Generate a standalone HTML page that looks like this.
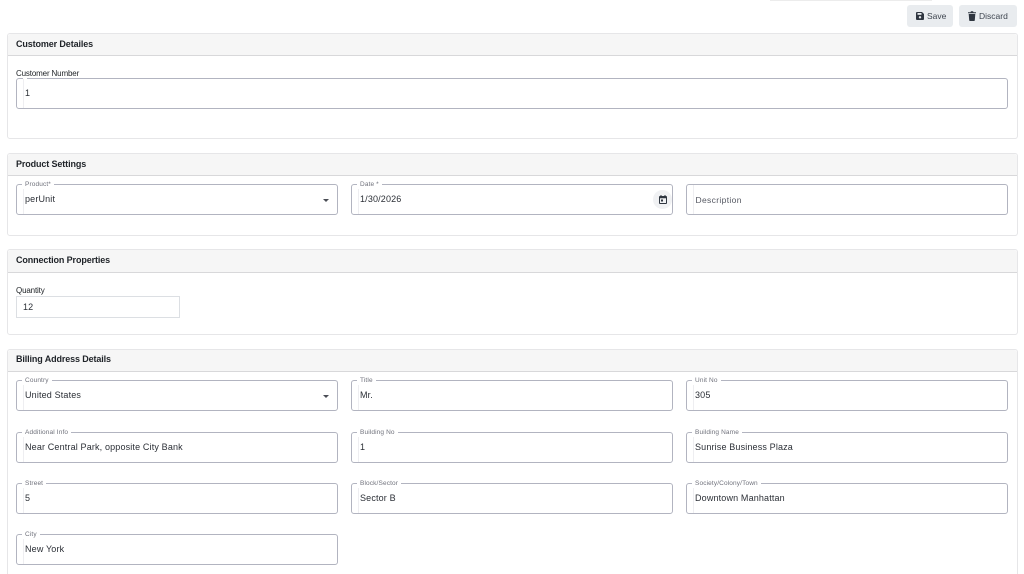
<!DOCTYPE html>
<html><head><meta charset="utf-8">
<style>
html,body{margin:0;padding:0;background:#fff;width:1024px;height:574px;overflow:hidden;font-family:"Liberation Sans",sans-serif;color:#212529}
#w{position:absolute;left:0;top:0;width:1024px;height:574px;overflow:hidden}
.a{position:absolute;box-sizing:border-box}
.card{position:absolute;left:7px;width:1011px;box-sizing:border-box;border:1px solid #e6e6e8;border-radius:3px;background:#fff}
.hd{position:absolute;left:0;top:0;right:0;box-sizing:border-box;background:#f6f6f6;border-bottom:1px solid #d8d8da;border-radius:3px 3px 0 0}
.ht{position:absolute;left:16px;font:bold 9px/12px "Liberation Sans",sans-serif;color:#1f2328;white-space:nowrap;letter-spacing:-.12px}
.f{position:absolute;box-sizing:border-box;border:1px solid #b2b4c0;border-radius:3px;background:#fff}
.f:before{content:"";position:absolute;left:6px;top:0;bottom:0;width:1px;background:#eeeef1}
.lb{position:absolute;font:6.5px/8px "Liberation Sans",sans-serif;color:#70727c;background:#fff;padding:0 3px;white-space:nowrap;letter-spacing:.13px}
.v{position:absolute;font:9px/12px "Liberation Sans",sans-serif;color:#2b2f36;white-space:nowrap;letter-spacing:.155px;background:transparent}
.pl{position:absolute;font:8px/11px "Liberation Sans",sans-serif;color:#212529;white-space:nowrap;letter-spacing:-.15px}
.arr{position:absolute;width:0;height:0;border-left:3px solid transparent;border-right:3px solid transparent;border-top:3px solid #4a4d55}
.btn{position:absolute;top:5px;height:22px;background:#e9ecef;border-radius:3px;font:8.5px/22px "Liberation Sans",sans-serif;color:#3f4650;white-space:nowrap}
</style></head><body><div id="w">

<div class="a" style="left:770px;top:0;width:162px;height:1px;background:#ececec"></div>

<div class="btn" style="left:907px;width:46px"><svg class="a" style="left:9px;top:7px" width="8" height="8" viewBox="0 0 8 8"><path d="M0 1a1 1 0 0 1 1-1h5l2 2v5a1 1 0 0 1-1 1H1a1 1 0 0 1-1-1z" fill="#2f3640"/><rect x="1.5" y="1" width="4" height="1.8" fill="#e9ecef"/><circle cx="4" cy="5.3" r="1.2" fill="#e9ecef"/></svg><span class="a" style="left:20px;top:0">Save</span></div>
<div class="btn" style="left:959px;width:58px"><svg class="a" style="left:9px;top:6px" width="8" height="10" viewBox="0 0 8 10"><path d="M0 1.2h2.4L3 .3h2l.6.9H8v1.1H0zM.7 3h6.6l-.5 6.3a.7.7 0 0 1-.7.7H1.9a.7.7 0 0 1-.7-.7z" fill="#2f3640"/></svg><span class="a" style="left:20px;top:0">Discard</span></div>

<!-- Card 1 -->
<div class="card" style="top:33px;height:106px"><div class="hd" style="height:22px"></div></div>
<div class="ht" style="top:38px">Customer Detailes</div>
<div class="f" style="left:16px;top:78px;width:992px;height:31px"></div>
<div class="a" style="left:23px;top:78px;width:4px;height:1px;background:#fff"></div>
<div class="pl" style="left:16px;top:68px">Customer Number</div>
<div class="v" style="left:25px;top:87px">1</div>

<!-- Card 2 -->
<div class="card" style="top:153px;height:83px"><div class="hd" style="height:22px"></div></div>
<div class="ht" style="top:158px">Product Settings</div>
<div class="f" style="left:16px;top:184px;width:322px;height:31px"></div>
<div class="lb" style="left:22px;top:181px">Product*</div>
<div class="v" style="left:25px;top:193px">perUnit</div>
<div class="arr" style="left:323px;top:199px"></div>
<div class="f" style="left:351px;top:184px;width:322px;height:31px"></div>
<div class="lb" style="left:357px;top:181px">Date *</div>
<div class="v" style="left:360px;top:193px">1/30/2026</div>
<div class="a" style="left:653px;top:190px;width:19px;height:19px;border-radius:50%;background:#f0f1f3"></div>
<svg class="a" style="left:659px;top:195px" width="8" height="9" viewBox="0 0 8 9"><path d="M1.5 0v1H1a1 1 0 0 0-1 1v6a1 1 0 0 0 1 1h6a1 1 0 0 0 1-1V2a1 1 0 0 0-1-1h-.5V0h-1v1h-3V0zM1 3.2h6V8H1z" fill="#2f3640"/><rect x="2" y="4.5" width="2" height="2" fill="#2f3640"/></svg>
<div class="f" style="left:686px;top:184px;width:322px;height:31px"></div>
<div class="pl" style="left:695.5px;top:195px;color:#555862;font-size:8.5px;letter-spacing:.34px">Description</div>

<!-- Card 3 -->
<div class="card" style="top:249px;height:86px"><div class="hd" style="height:23px"></div></div>
<div class="ht" style="top:254px">Connection Properties</div>
<div class="pl" style="left:16px;top:285px">Quantity</div>
<div class="a" style="left:16px;top:296px;width:164px;height:22px;border:1px solid #dcdfe3"></div>
<div class="v" style="left:23px;top:301px">12</div>

<!-- Card 4 -->
<div class="card" style="top:349px;height:240px"><div class="hd" style="height:22px"></div></div>
<div class="ht" style="top:353px">Billing Address Details</div>

<div class="f" style="left:16px;top:380px;width:322px;height:31px"></div>
<div class="lb" style="left:22px;top:377px">Country</div>
<div class="v" style="left:25px;top:389px">United States</div>
<div class="arr" style="left:323px;top:395px"></div>
<div class="f" style="left:351px;top:380px;width:322px;height:31px"></div>
<div class="lb" style="left:357px;top:377px">Title</div>
<div class="v" style="left:360px;top:389px">Mr.</div>
<div class="f" style="left:686px;top:380px;width:322px;height:31px"></div>
<div class="lb" style="left:692px;top:377px">Unit No</div>
<div class="v" style="left:695px;top:389px">305</div>

<div class="f" style="left:16px;top:432px;width:322px;height:31px"></div>
<div class="lb" style="left:22px;top:429px">Additional Info</div>
<div class="v" style="left:25px;top:441px">Near Central Park, opposite City Bank</div>
<div class="f" style="left:351px;top:432px;width:322px;height:31px"></div>
<div class="lb" style="left:357px;top:429px">Building No</div>
<div class="v" style="left:360px;top:441px">1</div>
<div class="f" style="left:686px;top:432px;width:322px;height:31px"></div>
<div class="lb" style="left:692px;top:429px">Building Name</div>
<div class="v" style="left:695px;top:441px">Sunrise Business Plaza</div>

<div class="f" style="left:16px;top:483px;width:322px;height:31px"></div>
<div class="lb" style="left:22px;top:480px">Street</div>
<div class="v" style="left:25px;top:492px">5</div>
<div class="f" style="left:351px;top:483px;width:322px;height:31px"></div>
<div class="lb" style="left:357px;top:480px">Block/Sector</div>
<div class="v" style="left:360px;top:492px">Sector B</div>
<div class="f" style="left:686px;top:483px;width:322px;height:31px"></div>
<div class="lb" style="left:692px;top:480px">Society/Colony/Town</div>
<div class="v" style="left:695px;top:492px">Downtown Manhattan</div>

<div class="f" style="left:16px;top:534px;width:322px;height:31px"></div>
<div class="lb" style="left:22px;top:531px">City</div>
<div class="v" style="left:25px;top:543px">New York</div>

</div></body></html>
